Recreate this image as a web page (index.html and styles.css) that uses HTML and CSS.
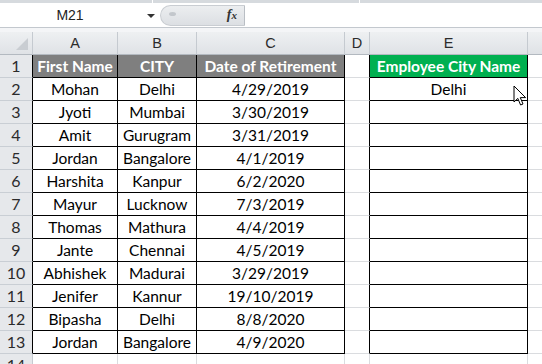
FILE: index.html
```html
<!DOCTYPE html>
<html lang="en">
  <head>
    <meta charset="UTF-8" />
    <meta name="viewport" content="width=device-width, initial-scale=1.0" />
    <title>Employee City Lookup</title>
    <link rel="stylesheet" href="styles.css">
  </head>
  <body>
    <div class="strip"><span class="tick t1"></span><span class="tick t2"></span></div>
    <div class="formula-bar">
      <div class="name-box">M21</div>
      <div class="drop"></div>
      <div class="fx-box">
        <span class="knob"></span>
        <span class="fx">f<i>x</i></span>
      </div>
      <div class="formula-input"></div>
    </div>
    <div class="gutter"></div>
    <table class="sheet">
      <colgroup>
        <col style="width: 33px" />
        <col style="width: 85px" />
        <col style="width: 79px" />
        <col style="width: 148px" />
        <col style="width: 25px" />
        <col style="width: 158px" />
        <col style="width: 40px" />
      </colgroup>
      <tr class="cols">
        <th class="corner"><span class="tri"></span></th>
        <th>A</th><th>B</th><th>C</th><th>D</th><th>E</th><th></th>
      </tr>
      <tr>
        <th class="rh">1</th>
        <td class="d hd">First Name</td><td class="d hd">CITY</td><td class="d hd">Date of Retirement</td>
        <td class="gap"></td><td class="d hd green">Employee City Name</td><td></td>
      </tr>
      <tr>
        <th class="rh">2</th>
        <td class="d">Mohan</td><td class="d">Delhi</td><td class="d">4/29/2019</td>
        <td class="gap"></td><td class="d">Delhi</td><td></td>
      </tr>
      <tr>
        <th class="rh">3</th>
        <td class="d">Jyoti</td><td class="d">Mumbai</td><td class="d">3/30/2019</td>
        <td class="gap"></td><td class="d"></td><td></td>
      </tr>
      <tr>
        <th class="rh">4</th>
        <td class="d">Amit</td><td class="d">Gurugram</td><td class="d">3/31/2019</td>
        <td class="gap"></td><td class="d"></td><td></td>
      </tr>
      <tr>
        <th class="rh">5</th>
        <td class="d">Jordan</td><td class="d">Bangalore</td><td class="d">4/1/2019</td>
        <td class="gap"></td><td class="d"></td><td></td>
      </tr>
      <tr>
        <th class="rh">6</th>
        <td class="d">Harshita</td><td class="d">Kanpur</td><td class="d">6/2/2020</td>
        <td class="gap"></td><td class="d"></td><td></td>
      </tr>
      <tr>
        <th class="rh">7</th>
        <td class="d">Mayur</td><td class="d">Lucknow</td><td class="d">7/3/2019</td>
        <td class="gap"></td><td class="d"></td><td></td>
      </tr>
      <tr>
        <th class="rh">8</th>
        <td class="d">Thomas</td><td class="d">Mathura</td><td class="d">4/4/2019</td>
        <td class="gap"></td><td class="d"></td><td></td>
      </tr>
      <tr>
        <th class="rh">9</th>
        <td class="d">Jante</td><td class="d">Chennai</td><td class="d">4/5/2019</td>
        <td class="gap"></td><td class="d"></td><td></td>
      </tr>
      <tr>
        <th class="rh">10</th>
        <td class="d">Abhishek</td><td class="d">Madurai</td><td class="d">3/29/2019</td>
        <td class="gap"></td><td class="d"></td><td></td>
      </tr>
      <tr>
        <th class="rh">11</th>
        <td class="d">Jenifer</td><td class="d">Kannur</td><td class="d">19/10/2019</td>
        <td class="gap"></td><td class="d"></td><td></td>
      </tr>
      <tr>
        <th class="rh">12</th>
        <td class="d">Bipasha</td><td class="d">Delhi</td><td class="d">8/8/2020</td>
        <td class="gap"></td><td class="d"></td><td></td>
      </tr>
      <tr>
        <th class="rh">13</th>
        <td class="d">Jordan</td><td class="d">Bangalore</td><td class="d">4/9/2020</td>
        <td class="gap"></td><td class="d"></td><td></td>
      </tr>
      <tr class="last">
        <th class="rh plain">14</th>
        <td></td><td></td><td></td><td></td><td></td><td></td>
      </tr>
    </table>
    <svg class="cursor" width="14" height="22" viewBox="0 0 14 22">
      <path d="M1 1 L1 17 L4.8 13.4 L7.6 20 L10 19 L7.3 12.6 L12.6 12.6 Z" fill="#fff" stroke="#000" stroke-width="1" stroke-linejoin="miter" />
    </svg>
  </body>
</html>
```

FILE: styles.css
```css
body {
  margin: 0;
  width: 542px;
  height: 364px;
  overflow: hidden;
  position: relative;
  background: #fff;
  font-family: Lato, "Liberation Sans", sans-serif;
  font-size: 15.5px;
  color: #000;
}
.strip {
  height: 3px;
  background: #d6dade;
  position: relative;
}
.tick {
  position: absolute;
  top: 0;
  width: 1px;
  height: 3px;
  background: #fff;
}
.t1 { left: 152px; }
.t2 { left: 359px; }
.formula-bar {
  display: flex;
  height: 24px;
  border-bottom: 1px solid #c3c8ce;
  background: #fff;
}
.name-box {
  width: 140px;
  line-height: 24px;
  text-align: center;
  font-family: "Liberation Sans", sans-serif;
  font-size: 14px;
  color: #222;
}
.drop {
  width: 20px;
  position: relative;
}
.drop::after {
  content: "";
  position: absolute;
  left: 7px;
  top: 11px;
  border-left: 4px solid transparent;
  border-right: 4px solid transparent;
  border-top: 4px solid #333;
}
.fx-box {
  width: 85px;
  margin-top: 2px;
  height: 21px;
  background: linear-gradient(#eceef0, #dcdfe3);
  border: 1px solid #c9cdd2;
  border-right: 1px solid #b9bec4;
  border-radius: 12px 0 0 12px;
  position: relative;
  box-sizing: border-box;
}
.knob {
  position: absolute;
  left: 8px;
  top: 6px;
  width: 7px;
  height: 4px;
  border-radius: 50%;
  background: #c3c7cc;
}
.fx {
  position: absolute;
  right: 7px;
  top: 1px;
  font-family: "Liberation Serif", serif;
  font-style: italic;
  font-weight: bold;
  font-size: 14px;
  color: #333;
}
.fx i {
  font-size: 11px;
}
.formula-input {
  flex: 1;
}
.gutter {
  height: 4px;
  background: #f4f5f7;
}
.sheet {
  border-collapse: separate;
  border-spacing: 0;
  table-layout: fixed;
  width: 568px;
}
.sheet td,
.sheet th {
  height: 22px;
  padding: 0;
  border-right: 1px solid #dadcdf;
  border-bottom: 1px solid #dadcdf;
  text-align: center;
  white-space: nowrap;
  overflow: hidden;
  font-weight: normal;
  line-height: 22px;
}
.cols th {
  background: linear-gradient(#eef0f2, #dfe2e6);
  border-right: 1px solid #c5cad0;
  border-bottom: 1px solid #b3b9c0;
  color: #2b2b2b;
  font-family: "Liberation Sans", sans-serif;
  font-size: 14.5px;
}
.corner {
  position: relative;
}
.tri {
  position: absolute;
  right: 4px;
  bottom: 4px;
  border-left: 12px solid transparent;
  border-bottom: 12px solid #c9cdd2;
}
.rh {
  background: #e6e8eb;
  color: #2b2b2b;
  border-right: 1px solid #000 !important;
  border-bottom: 1px solid #c9ced4 !important;
  font-size: 16px;
}
.rh.plain {
  border-right: 1px solid #c5cad0 !important;
}
.d {
  border-right: 1px solid #000 !important;
  border-bottom: 1px solid #000 !important;
}
.hd {
  background: #7f7f7f;
  color: #fff;
  font-weight: bold !important;
}
.hd.green {
  background: #00b050;
}
.gap {
  border-right: 1px solid #000 !important;
}
.cursor {
  position: absolute;
  left: 513px;
  top: 85px;
}
```
